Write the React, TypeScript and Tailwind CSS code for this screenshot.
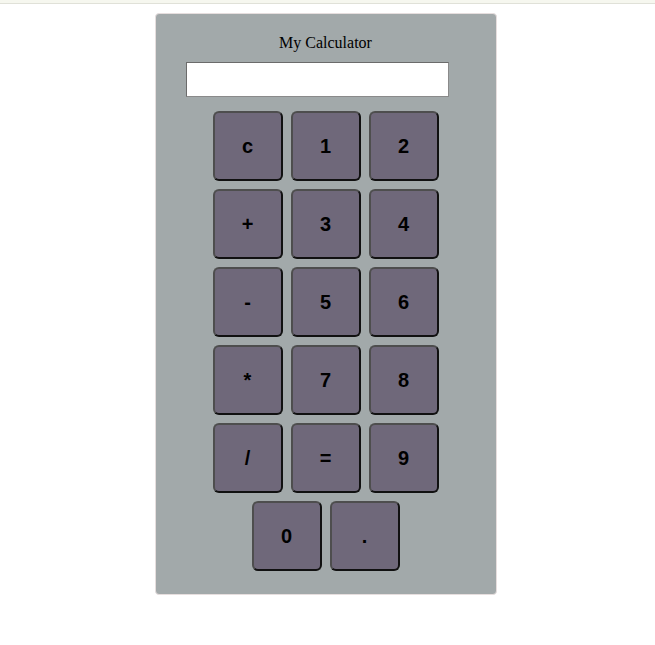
import React from "react";

const rows: string[][] = [
  ["c", "1", "2"],
  ["+", "3", "4"],
  ["-", "5", "6"],
  ["*", "7", "8"],
  ["/", "=", "9"],
  ["0", "."],
];

function Key({ label }: { label: string }) {
  return (
    <button className="w-[70px] h-[70px] rounded-[6px] bg-[#6f687a] border-2 border-t-[#4e4e4e] border-l-[#4e4e4e] border-r-[#111] border-b-[#111] text-black text-[20px] font-bold font-['Liberation_Sans',Arial,sans-serif] flex items-center justify-center">
      {label}
    </button>
  );
}

export default function App() {
  return (
    <div className="min-h-[645px] bg-white">
      <div className="h-[4px] bg-[#f6f7ef] border-b border-[#e0e1d8]" />
      <div className="flex justify-center pt-[9px] pr-[4px]">
        <div className="w-[342px] h-[582px] bg-[#a2a9aa] rounded-[4px] border border-[#e6dede] flex flex-col items-center pt-[20px]">
          <div className="font-['Liberation_Serif',serif] text-[16px] leading-[18px] text-black">
            My Calculator
          </div>
          <div className="mt-[10px] self-start ml-[30px] w-[263px] h-[35px] bg-white border border-t-[#6b6b6b] border-l-[#6b6b6b] border-r-[#8a8a8a] border-b-[#8a8a8a]" />
          <div className="mt-[14px] flex flex-col gap-[8px] items-center">
            {rows.map((r, i) => (
              <div key={i} className="flex gap-[8px]">
                {r.map((k) => (
                  <Key key={k} label={k} />
                ))}
              </div>
            ))}
          </div>
        </div>
      </div>
    </div>
  );
}
